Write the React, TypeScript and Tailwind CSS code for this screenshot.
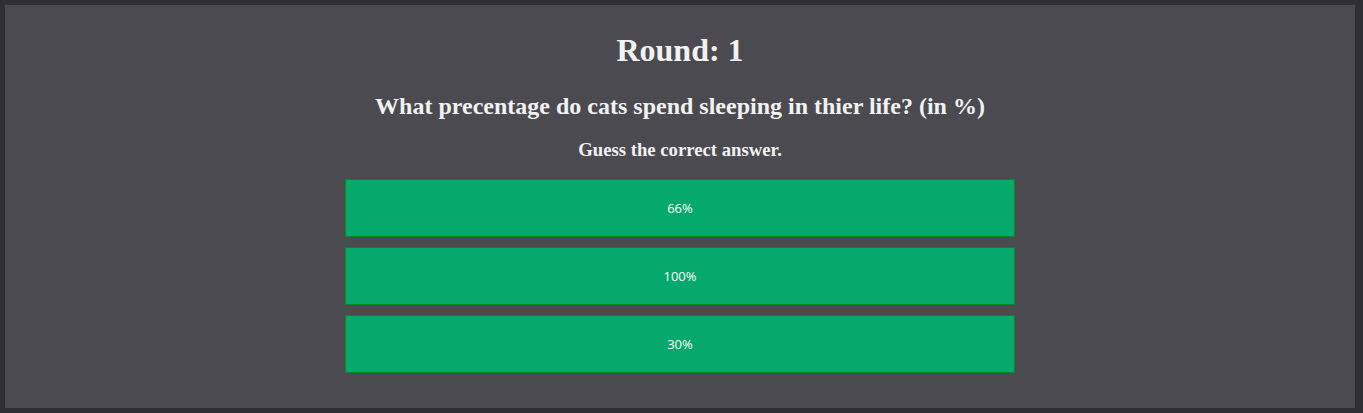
const answers = ["66%", "100%", "30%"];

export default function App() {
  return (
    <div className="min-h-screen bg-[#2f2e34] pt-[5px] pb-[5px] pl-[5px] pr-[8px]">
      <div className="flex h-[403px] flex-col items-center bg-[#4a4a50] font-['Liberation_Serif',serif] text-[#f2f2f2]">
        {/* Heading */}
        <h1 className="mt-[27px] text-[32px] leading-[37px] font-bold">Round: 1</h1>
        <h2 className="mt-[23px] text-[24px] leading-[28px] font-bold">
          What precentage do cats spend sleeping in thier life? (in %)
        </h2>
        <h3 className="mt-[19px] text-[18.72px] leading-[21px] font-bold">Guess the correct answer.</h3>

        {/* Answers */}
        <div className="mt-[19px] flex w-[670px] flex-col gap-[10px]">
          {answers.map((a) => (
            <button
              key={a}
              className="h-[58px] w-full border border-[#04891c] bg-[#05a96b] pt-[2px] font-['Open_Sans',sans-serif] text-[13px] text-white"
            >
              {a}
            </button>
          ))}
        </div>
      </div>
    </div>
  );
}
